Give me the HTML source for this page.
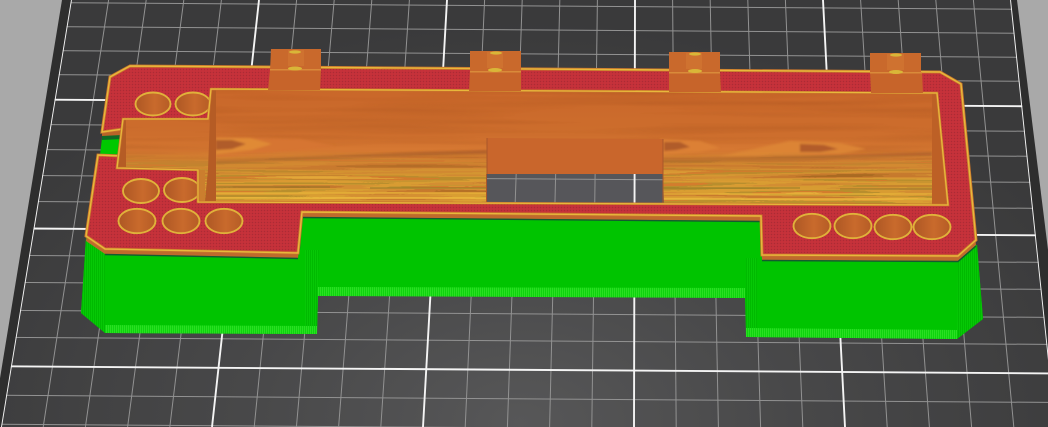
<!DOCTYPE html>
<html><head><meta charset="utf-8">
<style>html,body{margin:0;padding:0;background:#a9a9a9}svg{display:block}</style></head>
<body>
<svg xmlns="http://www.w3.org/2000/svg" width="1048" height="427" viewBox="0 0 1048 427">
<defs>
<radialGradient id="plate" gradientUnits="userSpaceOnUse" cx="520" cy="420" r="620" gradientTransform="translate(0 150) scale(1 .65)">
<stop offset="0" stop-color="#575758"/><stop offset=".45" stop-color="#484849"/><stop offset="1" stop-color="#3a3a3b"/></radialGradient>
<clipPath id="inner"><polygon points="71,0 1011,0 1056,427 1,427"/></clipPath>
<clipPath id="win"><polygon points="487,174 663,174 664,204 486,204"/></clipPath>
<clipPath id="cav"><path d="M211,89 L937,93 L948,205 L198,202 L198,170 L117,168 L123,119 L208,119 Z"/></clipPath>
<pattern id="red" width="3" height="3" patternUnits="userSpaceOnUse"><rect width="3" height="3" fill="#c2303a"/><rect width="1" height="1" fill="#ab2c34"/><rect x="1.5" y="1.5" width="1" height="1" fill="#d0363a"/></pattern>
<pattern id="gs" width="2" height="3" patternUnits="userSpaceOnUse"><rect width="2" height="3" fill="#0ed40e"/><rect width="1" height="3" fill="#2adf22"/></pattern>
<pattern id="gc" width="2" height="3" patternUnits="userSpaceOnUse"><rect width="2" height="3" fill="#06c806"/><rect width="1" height="3" fill="#00ba00"/></pattern>
<linearGradient id="woodBase" gradientUnits="userSpaceOnUse" x1="0" y1="89" x2="0" y2="205">
<stop offset="0" stop-color="#c9672a"/><stop offset=".4" stop-color="#cd6e2d"/><stop offset=".52" stop-color="#d67832"/><stop offset=".66" stop-color="#cc7c30"/><stop offset=".85" stop-color="#c4962f"/><stop offset="1" stop-color="#d6aa38"/></linearGradient>
<linearGradient id="rampM" gradientUnits="userSpaceOnUse" x1="0" y1="150" x2="0" y2="182">
<stop offset="0" stop-color="#000"/><stop offset="1" stop-color="#ddd"/></linearGradient>
<linearGradient id="circ" x1="0" x2="1" y1="0" y2="0">
<stop offset="0" stop-color="#ad5724"/><stop offset=".55" stop-color="#c96a2c"/><stop offset="1" stop-color="#b55c26"/></linearGradient>
<mask id="ramp" maskUnits="userSpaceOnUse" x="100" y="80" width="860" height="130"><rect x="100" y="80" width="860" height="130" fill="url(#rampM)"/></mask>
<filter id="streak" x="0" y="0" width="1" height="1" color-interpolation-filters="sRGB">
<feTurbulence type="fractalNoise" baseFrequency="0.004 0.2" numOctaves="2" seed="7"/>
<feColorMatrix type="matrix" values="1 0 0 0 0 1 0 0 0 0 1 0 0 0 0 0 0 0 0 1"/>
<feComponentTransfer>
<feFuncR type="discrete" tableValues=".5 .55 .62 .78 .84 .86 .72 .84 .9 .93 .6"/>
<feFuncG type="discrete" tableValues=".3 .33 .38 .46 .56 .62 .56 .48 .66 .7 .4"/>
<feFuncB type="discrete" tableValues=".1 .12 .12 .18 .2 .2 .18 .18 .22 .24 .14"/>
</feComponentTransfer>
<feGaussianBlur stdDeviation="0.6 0.3"/>
</filter>
<filter id="fine" x="0" y="0" width="1" height="1" color-interpolation-filters="sRGB">
<feTurbulence type="fractalNoise" baseFrequency="0.004 0.12" numOctaves="2" seed="3"/>
<feColorMatrix type="matrix" values="0 0 0 0 .55  0 0 0 0 .25  0 0 0 0 .08  1.6 0 0 0 -.7"/>
</filter>
<filter id="soft"><feGaussianBlur stdDeviation="1"/></filter>
<g id="grid" fill="none" stroke-linecap="butt">
<g stroke="#929292" stroke-width="1">
<path d="M108.6,0L43.2,427M146.2,0L85.4,427M183.8,0L127.6,427M221.4,0L169.8,427M296.6,0L254.2,427M334.2,0L296.4,427M371.8,0L338.6,427M409.4,0L380.8,427M484.6,0L465.2,427M522.2,0L507.4,427M559.8,0L549.6,427M597.4,0L591.8,427M672.6,0L676.2,427M710.2,0L718.4,427M747.8,0L760.6,427M785.4,0L802.8,427M860.6,0L887.2,427M898.2,0L929.4,427M935.8,0L971.6,427M973.4,0L1013.8,427"/>
<path d="M0,2.3L1048,9.4M0,26.3L1048,33.4M0,50.3L1048,57.4M0,74.3L1048,81.4M0,124.3L1048,131.4M0,149.3L1048,156.4M0,175.3L1048,182.4M0,201.3L1048,208.4M0,255.3L1048,262.4M0,282.3L1048,289.4M0,310.3L1048,317.4M0,337.3L1048,344.4M0,395.3L1048,402.4M0,424.3L1048,431.4"/>
</g>
<g stroke="#f4f4f4" stroke-width="1.9">
<path d="M71,0L1,427M259,0L212,427M447,0L423,427M635,0L634,427M823,0L845,427M1011,0L1056,427"/>
<path d="M0,99.3L1048,106.4M0,228.3L1048,235.4M0,366.3L1048,373.4"/>
</g>
</g>
</defs>

<rect width="1048" height="427" fill="#a9a9a9"/>
<polygon points="62,0 1017,0 1070,427 -8,427" fill="#2e2e2e"/>
<polygon points="71,0 1011,0 1056,427 1,427" fill="url(#plate)"/>
<g clip-path="url(#inner)"><use href="#grid"/></g>

<!-- green supports -->
<polygon points="86,238 300,250 302,216 762,220 762,255 977,245 983,319 957,339 746,337 745,298 318,295 317,334 105,333 81,313" fill="#00c400"/>
<polygon points="86,238 105,252 105,333 81,313" fill="url(#gc)"/>
<polygon points="958,258 977,245 983,319 957,339" fill="url(#gc)"/>
<polygon points="305,250 319,250 317,334 305,334" fill="url(#gc)"/>
<polygon points="746,258 757,258 757,337 746,337" fill="url(#gc)"/>
<polygon points="105,325 317,326 317,334 105,333" fill="url(#gs)"/>
<polygon points="318,287 745,288 745,298 318,296" fill="url(#gs)"/>
<polygon points="746,328 957,330 957,339 746,337" fill="url(#gs)"/>

<!-- top surface side skirt -->
<path d="M130,66 L940,72 L961,84 L976,240 L958,256 L762,255 L761,216 L302,212 L298,253 L105,249 L86,236 L98,155 L122,156 L123,129 L102,132 L110,77 Z" transform="translate(0,5)" fill="#bf6a2c"/>
<path d="M105,254.500 L298,258.500 M302,217.500 L761,221.500 M762,260.500 L958,261.500 L976,246" fill="none" stroke="#145a30" stroke-width="1.4"/>
<polygon points="102,129 123,129 123,136 102,138" fill="#b86428"/>
<polygon points="102,138 122,137 121,155 100,155" fill="#00c800"/>
<polygon points="102,136 122,135 122,139 102,140" fill="#0f6a26"/>

<!-- red top surface -->
<path d="M130,66 L940,72 L961,84 L976,240 L958,256 L762,255 L761,216 L302,212 L298,253 L105,249 L86,236 L98,155 L122,156 L123,129 L102,132 L110,77 Z" fill="url(#red)" stroke="#c8752c" stroke-width="3" stroke-linejoin="miter"/>
<path d="M130,66 L940,72 L961,84 L976,240 L958,256 L762,255 L761,216 L302,212 L298,253 L105,249 L86,236 L98,155 L122,156 L123,129 L102,132 L110,77 Z" fill="none" stroke="#e8b83c" stroke-width="1.4"/>

<!-- circles -->
<g fill="url(#circ)" stroke="#e0b23a" stroke-width="1.9">
<ellipse cx="153" cy="104" rx="17.5" ry="11.5"/><ellipse cx="193" cy="104" rx="17.5" ry="11.5"/>
<ellipse cx="141" cy="191" rx="18" ry="12"/><ellipse cx="182" cy="190" rx="18" ry="12"/>
<ellipse cx="137" cy="221" rx="18.5" ry="12.2"/><ellipse cx="181" cy="221" rx="18.5" ry="12.2"/><ellipse cx="224" cy="221" rx="18.5" ry="12.2"/>
<ellipse cx="812" cy="226" rx="18.5" ry="12.2"/><ellipse cx="853" cy="226" rx="18.5" ry="12.2"/><ellipse cx="893" cy="227" rx="18.5" ry="12.2"/><ellipse cx="932" cy="227" rx="18.5" ry="12.2"/>
</g>

<!-- cavity wood -->
<g clip-path="url(#cav)">
<rect x="100" y="85" width="860" height="125" fill="url(#woodBase)"/>
<rect x="100" y="85" width="860" height="125" filter="url(#fine)" opacity=".3"/>
<!-- contour eyes -->
<g filter="url(#soft)">
<path d="M216,137 L300,139 L335,146 L300,150 L216,158 Z" fill="#d67532"/>
<path d="M216,138 L250,138 L272,144 L252,150 L216,154 Z" fill="#e08a36"/>
<path d="M216,140 L232,140 L246,144 L232,149 L216,150 Z" fill="#b05c2a"/>
<path d="M660,139 L700,141 L720,148 L700,152 L660,155 Z" fill="#dc8034"/>
<path d="M664,142 L680,142 L690,147 L676,150 L664,151 Z" fill="#b05c2a"/>
<path d="M790,141 L840,143 L866,149 L840,154 L790,155 L720,156 Z" fill="#dc8436"/>
<path d="M800,144 L824,145 L838,149 L820,152 L800,152 Z" fill="#b25c2a"/>
<path d="M216,160 L420,152 L487,150 L487,154 L300,160 L216,164 Z" fill="#a8592a" opacity=".7"/>
<path d="M663,158 L800,156 L932,152 L932,156 L800,161 L663,163 Z" fill="#a8592a" opacity=".7"/>
</g>
<g mask="url(#ramp)"><rect x="100" y="85" width="860" height="125" filter="url(#streak)"/></g>
<g stroke-width="1.2" fill="none">
<path d="M215,198H487M663,199H932" stroke="#f0c040"/>
<path d="M215,193H487M663,194H932" stroke="#e8b43a"/>
<path d="M215,187H330M370,188H487M663,188H800M840,189H932" stroke="#8e7a28" opacity=".7"/>
<path d="M215,181H487M663,182H932" stroke="#e0a035" opacity=".6"/>
</g>
<!-- inner side walls -->
<polygon points="932,93 938,93 949,206 932,206" fill="#bd6026"/>
<polygon points="211,89 216,89 216,201 205,201 208,170" fill="#b55c25"/>
<polygon points="198,170 205,170 205,203 198,203" fill="#cb7e2e"/>
<polygon points="117,119 126,119 126,169 117,169" fill="#b55c25"/>
<!-- center wall + window -->
<polygon points="487,138 663,139 663,175 487,174" fill="#c9662c"/>
<polygon points="487,174 663,174 664,205 486,205" fill="#56565a"/>
<g clip-path="url(#win)"><use href="#grid"/></g>
<path d="M487,138 V174 M486.500,174 V204 M663,139 V204" stroke="#a9572a" stroke-width="1"/>
</g>
<path d="M211,89 L937,93 L948,205 L198,202 L198,170 L117,168 L123,119 L208,119 Z" fill="none" stroke="#c8752c" stroke-width="2.6"/>
<path d="M211,89 L937,93 L948,205 L198,202 L198,170 L117,168 L123,119 L208,119 Z" fill="none" stroke="#e8b83c" stroke-width="1.3"/>

<!-- tabs -->
<g>
<polygon points="271,49 321,49 321,71 270,71" fill="#c9692c"/><polygon points="270,70 321,70 320,90 268,90" fill="#c7642a"/>
<polygon points="288,50 304,50 304,66 288,66" fill="#cf7230"/><rect x="270" y="69" width="51" height="1.500" fill="#d98a3a"/>
<ellipse cx="295" cy="52" rx="6" ry="1.600" fill="#d9b638"/><ellipse cx="295" cy="68.500" rx="7" ry="2" fill="#d9b638"/>

<polygon points="470,51 521,51 521,72 470,72" fill="#c9692c"/><polygon points="470,71 521,71 521,91 469,91" fill="#c7642a"/>
<polygon points="487,52 503,52 503,68 487,68" fill="#cf7230"/><rect x="470" y="71" width="51" height="1.500" fill="#d98a3a"/>
<ellipse cx="496" cy="53" rx="6" ry="1.600" fill="#d9b638"/><ellipse cx="495" cy="70" rx="7" ry="2" fill="#d9b638"/>

<polygon points="669,52 720,52 720,73 669,73" fill="#c9692c"/><polygon points="669,72 720,72 721,92 669,92" fill="#c7642a"/>
<polygon points="686,53 702,53 702,69 686,69" fill="#cf7230"/><rect x="669" y="72" width="51" height="1.500" fill="#d98a3a"/>
<ellipse cx="695" cy="54" rx="6" ry="1.600" fill="#d9b638"/><ellipse cx="695" cy="71" rx="7" ry="2" fill="#d9b638"/>

<polygon points="870,53 921,53 921,73 870,73" fill="#c9692c"/><polygon points="870,72 922,72 923,93 871,93" fill="#c7642a"/>
<polygon points="887,54 904,54 904,70 887,70" fill="#cf7230"/><rect x="870" y="72" width="52" height="1.500" fill="#d98a3a"/>
<ellipse cx="896" cy="55" rx="6" ry="1.600" fill="#d9b638"/><ellipse cx="896" cy="72" rx="7" ry="2" fill="#d9b638"/>
</g>
</svg>
</body></html>
